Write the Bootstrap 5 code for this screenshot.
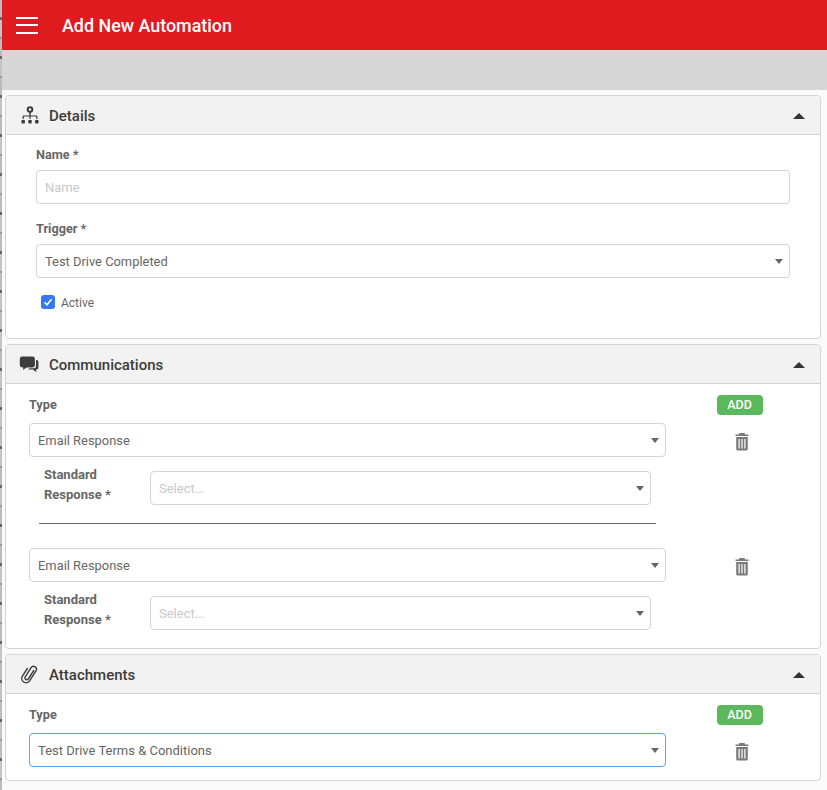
<!DOCTYPE html>
<html lang="en"><head><meta charset="utf-8">
<link href="https://cdn.jsdelivr.net/npm/bootstrap@5.3.0/dist/css/bootstrap.min.css" rel="stylesheet">
<style>
html,body{height:100%;overflow:hidden}
body{font-family:Roboto,"Liberation Sans",sans-serif;background:repeating-linear-gradient(#bcbcbc 0 17px,#666 17px 20px,#c4c4c4 20px 37px,#999 37px 39px);color:#666;font-size:13px}
.shell{margin-left:2px;height:790px;background:#fafafa;display:flex;flex-direction:column}
.topbar{height:50px;flex:none;background:#e01b20;color:#fff;padding:0 0 0 14px;gap:24px}
.burger{width:22px;height:17px;border-top:2px solid #fff;border-bottom:2px solid #fff;background:linear-gradient(#fff,#fff) center/100% 2px no-repeat}
.topbar-title{font-size:17.9px;font-weight:500;padding-top:2px}
.greyband{height:40px;flex:none;background:#d6d6d6}
.panels{padding:5px 6px 0 3px;display:flex;flex-direction:column;gap:5px}
.panel{border:1px solid #d4d4d4;border-radius:4px;background:#fff}
.panel-head{height:39px;background:#f2f2f2;border-bottom:1px solid #d4d4d4;border-radius:3px 3px 0 0;padding:2px 15px 0 14px;color:#3c3c3c;font-size:15px;font-weight:500}
.head-ico{width:20px;height:20px;margin-right:9px;flex:none;fill:#3c3c3c}
.caret-up{width:0;height:0;border-left:6px solid transparent;border-right:6px solid transparent;border-bottom:6px solid #333;margin-left:auto}
.lbl{font-weight:700;font-size:12.7px;color:#666;line-height:16px;display:block}
.lbl-tight{margin-bottom:7px}
.lbl-next{margin-top:17px}
.lbl-type{margin-bottom:11px;padding-top:1px;height:16px}
.fld{height:34px;border:1px solid #d4d4d4;border-radius:4px;background:#fff;font-size:12.9px;color:#666;padding:1px 8px 0;display:flex;align-items:center;position:relative}
.fld.ph{color:#c8c8c8;font-size:13px}
.fld.focus{border-color:#5aa5e6;font-size:13px}
.fld .arrow{position:absolute;right:6px;top:14px;width:0;height:0;border-left:4.5px solid transparent;border-right:4.5px solid transparent;border-top:5px solid #666}
.details-body{padding:12px 30px 29px 30px}
.comm-row{display:flex;padding:12px 0 0 23px}
.comm-row-last{padding-bottom:13px}
.comm-main{width:637px;flex:none}
.comm-side{width:150px;flex:none;display:flex;flex-direction:column;align-items:center}
.add-tag{width:46px;height:20px;margin:-1px 3px 0 0;background:#5cb85c;color:#fff;font-size:12.5px;font-weight:500;border:0;border-radius:4px;padding:0;line-height:20px;text-align:center}
.trash{width:14px;height:19px;fill:#7a7a7a;display:block;margin:17px 0 0 1px}
.trash-next{margin-top:106px}
.sub-row{display:flex;align-items:flex-end;margin:7px 15px 0 15px}
.sub-row-last{margin-bottom:18px}
.sub-row .lbl{width:106px;flex:none;line-height:20px;height:20px;font-size:13px;height:41px;padding-top:1px}
.sub-row .fld{flex:1}
.rule{height:1px;background:#666;margin:18px 10px 24px 10px}
.active-row{margin-top:17px;padding-left:5px;gap:6px;font-size:12px;color:#666;height:14px}
.active-text{padding-top:1px}
.tick{width:14px;height:14px;background:#3478f6;border-radius:3px;display:flex;align-items:center;justify-content:center}
.tick svg{width:10px;height:10px}
.ico-comm{margin-left:-1px;margin-right:10px}
</style></head><body>
<div class="shell">
<div class="topbar d-flex align-items-center"><span class="burger"></span><span class="topbar-title">Add New Automation</span></div>
<div class="greyband"></div>
<div class="panels">
<section class="panel">
<div class="panel-head d-flex align-items-center">
<svg class="head-ico" viewBox="0 0 20 20"><circle cx="10" cy="3.600" r="2.300" fill="none" stroke="#3c3c3c" stroke-width="2"/><path d="M9.300 6h1.400v3.400H9.300zM3 9.400h14v1.200H3zM2.600 10h1.200v3H2.600zM9.400 10h1.200v3H9.400zM16.200 10h1.200v3h-1.200z"/><rect x="1.500" y="14" width="3.400" height="3.400" rx=".6"/><rect x="8.300" y="14" width="3.400" height="3.400" rx=".6"/><rect x="15.100" y="14" width="3.400" height="3.400" rx=".6"/></svg>
Details<span class="caret-up"></span></div>
<div class="details-body">
<label class="lbl lbl-tight">Name *</label>
<div class="fld ph">Name</div>
<label class="lbl lbl-tight lbl-next">Trigger *</label>
<div class="fld">Test Drive Completed<span class="arrow"></span></div>
<div class="d-flex align-items-center active-row"><span class="tick"><svg viewBox="0 0 10 10"><path d="M1.500 5.200 4 7.800 8.500 2.200" fill="none" stroke="#fff" stroke-width="1.600"/></svg></span><span class="active-text">Active</span></div>
</div>
</section>
<section class="panel">
<div class="panel-head d-flex align-items-center">
<svg class="head-ico ico-comm" viewBox="0 0 20 20"><path d="M3.200 1.500h10.300a2.400 2.400 0 0 1 2.400 2.400v6.200a2.400 2.400 0 0 1-2.400 2.400H7.500l-3.500 2.600.4-2.600H3.200A2.400 2.400 0 0 1 .8 10.100V3.900a2.400 2.400 0 0 1 2.400-2.400z"/><path d="M17 5h.6a1.800 1.800 0 0 1 1.800 1.800v6a1.800 1.800 0 0 1-1.800 1.800h-.6l.4 2.600-3.500-2.600H9l1.400-1.300h4a2.600 2.600 0 0 0 2.600-2.600z"/></svg>
Communications<span class="caret-up"></span></div>
<div class="comm-row">
<div class="comm-main">
<label class="lbl lbl-type">Type</label>
<div class="fld">Email Response<span class="arrow"></span></div>
<div class="sub-row"><span class="lbl">Standard Response *</span><div class="fld ph">Select...<span class="arrow"></span></div></div>
<div class="rule"></div>
<div class="fld">Email Response<span class="arrow"></span></div>
<div class="sub-row sub-row-last"><span class="lbl">Standard Response *</span><div class="fld ph">Select...<span class="arrow"></span></div></div>
</div>
<div class="comm-side">
<button class="add-tag" type="button">ADD</button>
<svg class="trash" viewBox="0 0 14 19"><path d="M4 2.500a1 1 0 0 1 1-1.500h4a1 1 0 0 1 1 1.500h3.500v1.500H.5V2.500zM1.200 5h11.600v12a1.500 1.500 0 0 1-1.500 1.500H2.700A1.500 1.500 0 0 1 1.200 17zM3.500 7v9.500h1.200V7zm2.900 0v9.500h1.200V7zm2.900 0v9.500h1.200V7z" fill-rule="evenodd"/></svg>
<svg class="trash trash-next" viewBox="0 0 14 19"><path d="M4 2.500a1 1 0 0 1 1-1.500h4a1 1 0 0 1 1 1.500h3.500v1.500H.5V2.500zM1.200 5h11.600v12a1.500 1.500 0 0 1-1.500 1.500H2.700A1.500 1.500 0 0 1 1.200 17zM3.500 7v9.500h1.200V7zm2.900 0v9.500h1.200V7zm2.900 0v9.500h1.200V7z" fill-rule="evenodd"/></svg>
</div>
</div>
</section>
<section class="panel">
<div class="panel-head d-flex align-items-center">
<svg class="head-ico" viewBox="0 0 20 20"><path d="M13.800 5.500 8.300 14a1.900 1.900 0 0 1-3.200-2l6-9.300a2.900 2.900 0 0 1 4.900 3.100l-6.400 10a4.300 4.300 0 0 1-7.200-4.700L7.300 3.500" fill="none" stroke="#3c3c3c" stroke-width="1.400" stroke-linecap="round"/></svg>
Attachments<span class="caret-up"></span></div>
<div class="comm-row comm-row-last">
<div class="comm-main">
<label class="lbl lbl-type">Type</label>
<div class="fld focus">Test Drive Terms &amp; Conditions<span class="arrow"></span></div>
</div>
<div class="comm-side">
<button class="add-tag" type="button">ADD</button>
<svg class="trash" viewBox="0 0 14 19"><path d="M4 2.500a1 1 0 0 1 1-1.500h4a1 1 0 0 1 1 1.500h3.500v1.500H.5V2.500zM1.200 5h11.600v12a1.500 1.500 0 0 1-1.500 1.500H2.700A1.500 1.500 0 0 1 1.200 17zM3.500 7v9.500h1.200V7zm2.900 0v9.500h1.200V7zm2.900 0v9.500h1.200V7z" fill-rule="evenodd"/></svg>
</div>
</div>
</section>
</div>
</div>
<script src="https://cdn.jsdelivr.net/npm/bootstrap@5.3.0/dist/js/bootstrap.bundle.min.js"></script>
</body></html>
